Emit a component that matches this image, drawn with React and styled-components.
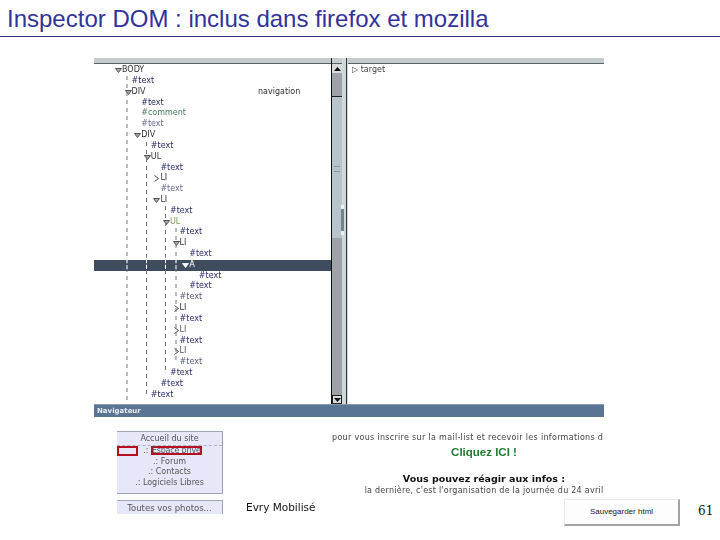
import React from "react";
import styled, { createGlobalStyle } from "styled-components";

const Global = createGlobalStyle`
  html, body { margin: 0; padding: 0; background: #fff; }
  #root { width: 720px; height: 540px; overflow: hidden; }
`;

const Slide = styled.div`
  position: relative;
  width: 720px;
  height: 540px;
  background: #fff;
  overflow: hidden;
`;
const Title = styled.h1`
  margin: 0;
  height: 36px;
  padding-left: 7px;
  border-bottom: 1px solid #333388;
  font: 400 24px/37px "Liberation Sans", Arial, sans-serif;
  color: #333399;
  white-space: nowrap;
`;
const Shot = styled.div`
  width: 510px;
  height: 456px;
  margin: 21px 0 0 94px;
  display: flex;
  flex-direction: column;
  overflow: hidden;
  filter: blur(0.35px);
`;
const Inspector = styled.div`
  display: flex;
  height: 346px;
`;
const TreePane = styled.div`
  position: relative;
  width: 237px;
  flex: none;
  display: flex;
  flex-direction: column;
  overflow: hidden;
`;
const HeaderBar = styled.div`
  flex: none;
  height: 5px;
  background: #c6cbd0;
  border-bottom: 1px solid #5a6068;
`;
const TreeBody = styled.div`
  padding-top: 1.2px;
`;
const Row = styled.div`
  position: relative;
  display: flex;
  align-items: center;
  height: 10.82px;
  padding-left: ${p => 28 + p.$level * 9.6}px;
  background: ${p => (p.$selected ? "#3f4c5e" : "transparent")};
  color: ${p => (p.$selected ? "#fff" : p.$color || "#2a2a6a")};
  font: 400 8px/10.82px "DejaVu Sans", sans-serif;
  white-space: nowrap;
`;
const Twisty = styled.svg`
  position: absolute;
  left: ${p => 28 + p.$level * 9.6 - 7}px;
  top: 2px;
  width: 7px;
  height: 7px;
`;
const ValueCell = styled.span`
  position: absolute;
  left: 164px;
  color: #333;
`;
const Guides = styled.svg`
  position: absolute;
  left: 0;
  top: 0;
  width: 237px;
  height: 346px;
  pointer-events: none;
`;
const Scroll = styled.div`
  width: 11px;
  flex: none;
  display: flex;
  flex-direction: column;
  background: #9ea3a8;
  border-left: 1px solid #111;
  box-sizing: border-box;
`;
const ScrollCap = styled.div`
  flex: none;
  height: 5px;
  background: #c6cbd0;
  border-bottom: 1px solid #5a6068;
`;
const ScrollButton = styled.div`
  flex: none;
  height: 9px;
  background: #d8dcdf;
  border: ${p => (p.$outlined ? "1px solid #222" : "0")};
  box-sizing: border-box;
  display: flex;
  align-items: center;
  justify-content: center;
`;
const ScrollGutter = styled.div`
  flex: ${p => (p.$grow ? 1 : "none")};
  height: ${p => (p.$grow ? "auto" : "23px")};
  background: #9ea3a8;
`;
const ScrollThumb = styled.div`
  flex: none;
  height: 142px;
  box-sizing: border-box;
  background: #b8c4cc;
  border-top: 1px solid #222;
  display: flex;
  justify-content: center;
  padding-top: 69px;
`;
const ScrollGrip = styled.div`
  width: 6px;
  height: 4px;
  border-top: 1px solid #8c959c;
  border-bottom: 1px solid #8c959c;
`;
const Splitter = styled.div`
  position: relative;
  width: 4px;
  flex: none;
  background: #d0d8dc;
  border-right: 1px solid #2c3238;
`;
const SplitGrip = styled.div`
  position: absolute;
  left: -1px;
  top: 147px;
  width: 3px;
  height: 30px;
  box-sizing: border-box;
  background: #76828c;
  border-top: 4px solid #eef2f4;
  border-bottom: 4px solid #eef2f4;
`;
const PropsPane = styled.div`
  flex: 1;
  display: flex;
  flex-direction: column;
  border-left: 1px solid #d0d8dc;
`;
const PropRow = styled.div`
  padding: 0 0 0 4px;
  font: 400 8px/11px "DejaVu Sans", sans-serif;
  color: #444;
`;
const NavBar = styled.div`
  flex: none;
  height: 13px;
  background: #5a7593;
  border-top: 1px solid #8a9cb0;
  box-sizing: border-box;
  padding-left: 3px;
  font: 700 7px/12px "DejaVu Sans", sans-serif;
  color: #e8eef4;
`;
const Page = styled.div`
  flex: 1;
  display: flex;
  padding-top: 14px;
  min-height: 0;
  overflow: hidden;
`;
const LeftColumn = styled.div`
  width: 106px;
  margin-left: 23px;
  flex: none;
  display: flex;
  flex-direction: column;
  gap: 6px;
`;
const MenuBox = styled.div`
  height: 63px;
  box-sizing: border-box;
  background: #e6e8fa;
  border-top: 1px solid #a0a6b4;
  border-right: 1px solid #9aa0ae;
  border-bottom: 1px solid #9aa0ae;
  color: #555;
  font: 400 8px/10.7px "DejaVu Sans", sans-serif;
  text-align: center;
  padding-top: 2px;
`;
const MenuHead = styled.div`
  height: 11px;
  border-bottom: 1px dashed #b0b4c0;
`;
const MenuRow = styled.div`
  position: relative;
  padding-left: ${p => p.$shift || 0}px;
`;
const Marked = styled.span`
  box-shadow: inset 0 0 0 2px #b80f20;
  padding: 0 1px;
  letter-spacing: -0.2px;
`;
const RedBox = styled.span`
  position: absolute;
  left: 0;
  top: 0;
  width: 21px;
  height: 10px;
  border: 2px solid #b80f20;
  box-sizing: border-box;
`;
const PhotosBox = styled.div`
  height: 14px;
  background: #e6e8fa;
  border-top: 1px solid #a0a6b4;
  border-right: 1px solid #9aa0ae;
  box-sizing: border-box;
  color: #555;
  font: 400 8.5px/15px "DejaVu Sans", sans-serif;
  text-align: center;
`;
const Brand = styled.div`
  align-self: flex-end;
  margin: 0 0 0 23px;
  font: 400 10.5px/13px "DejaVu Sans", sans-serif;
  color: #111;
  white-space: nowrap;
`;
const Info = styled.div`
  width: 272px;
  margin-left: auto;
  flex: none;
  overflow: hidden;
  padding-top: 1px;
`;
const InfoInner = styled.div`
  width: 304px;
  text-align: center;
`;
const InfoLine = styled.div`
  font: 400 8px/11px "DejaVu Sans", sans-serif;
  color: #444;
  white-space: nowrap;
  letter-spacing: ${p => p.$spacing || 0}px;
  text-align: ${p => p.$align || "center"};
`;
const Cta = styled.div`
  margin-top: 2px;
  font: 700 11.5px/14px "Liberation Sans", sans-serif;
  color: #1f7a32;
`;
const Heading = styled.div`
  margin-top: 13px;
  font: 700 9.5px/13px "DejaVu Sans", sans-serif;
  color: #111;
  white-space: nowrap;
`;
const SaveButton = styled.div`
  position: absolute;
  left: 564px;
  top: 499px;
  width: 116px;
  height: 27px;
  box-sizing: border-box;
  background: #fdfdfd;
  border-top: 1px solid #e8e8e8;
  border-left: 1px solid #e8e8e8;
  border-right: 2px solid #a4a4a4;
  border-bottom: 2px solid #a4a4a4;
  display: flex;
  align-items: center;
  justify-content: center;
  font: 400 8px/10px "Liberation Sans", sans-serif;
  color: #222;
`;
const PageNumber = styled.div`
  position: absolute;
  left: 698px;
  top: 503px;
  font: 400 12px/16px "DejaVu Serif", serif;
  color: #111;
`;

const rows = [
  ["BODY", 0, "open", "#333"],
  ["#text", 1],
  ["DIV", 1, "open", "#333"],
  ["#text", 2],
  ["#comment", 2, null, "#4a7a5a"],
  ["#text", 2, null, "#666a8a"],
  ["DIV", 2, "open", "#333"],
  ["#text", 3],
  ["UL", 3, "open", "#333"],
  ["#text", 4],
  ["LI", 4, "closed", "#333"],
  ["#text", 4, null, "#666a8a"],
  ["LI", 4, "open", "#333"],
  ["#text", 5],
  ["UL", 5, "open", "#7a9a5a"],
  ["#text", 6],
  ["LI", 6, "open", "#333"],
  ["#text", 7],
  ["A", 7, "open", "#fff", true],
  ["#text", 8],
  ["#text", 7],
  ["#text", 6, null, "#555a7a"],
  ["LI", 6, "closed", "#333"],
  ["#text", 6],
  ["LI", 6, "closed", "#555"],
  ["#text", 6],
  ["LI", 6, "closed", "#555"],
  ["#text", 6, null, "#555a7a"],
  ["#text", 5],
  ["#text", 4],
  ["#text", 3],
];

const guides = [
  { x: 33, y1: 18, y2: 346 },
  { x: 52.5, y1: 84, y2: 338 },
  { x: 71.5, y1: 148, y2: 312 },
  { x: 82, y1: 170, y2: 306 },
];

function Arrow({ state, level, selected }) {
  const stroke = selected ? "#fff" : "#333";
  return (
    <Twisty $level={level} viewBox="0 0 7 7">
      {state === "open" ? (
        <path d="M0.5 1.5H6.5L3.5 5.5Z" fill={selected ? "#fff" : "#aaa"} stroke={stroke} strokeWidth="0.8" />
      ) : (
        <path d="M1.5 0.5L5.5 3.5L1.5 6.5" fill="none" stroke={stroke} strokeWidth="0.9" />
      )}
    </Twisty>
  );
}

export default function App() {
  return (
    <Slide>
      <Global />
      <Title>Inspector DOM : inclus dans firefox et mozilla</Title>
      <Shot>
        <Inspector>
          <TreePane>
            <HeaderBar />
            <TreeBody>
              {rows.map(([label, level, state, color, selected], i) => (
                <Row key={i} $level={level} $color={color} $selected={selected}>
                  {state && <Arrow state={state} level={level} selected={selected} />}
                  {label}
                  {label === "DIV" && level === 1 && <ValueCell>navigation</ValueCell>}
                </Row>
              ))}
            </TreeBody>
            <Guides viewBox="0 0 237 346">
              {guides.map(g => (
                <g key={g.x}>
                  <line x1={g.x} x2={g.x} y1={g.y1} y2={g.y2} stroke="#777" strokeDasharray="4 4" />
                  <line x1={g.x} x2={g.x} y1={201} y2={211} stroke="#fff" strokeDasharray="4 2" />
                </g>
              ))}
            </Guides>
          </TreePane>
          <Scroll>
            <ScrollCap />
            <ScrollButton>
              <svg width="7" height="4" viewBox="0 0 7 4"><path d="M3.5 0L7 4H0Z" fill="#111" /></svg>
            </ScrollButton>
            <ScrollGutter />
            <ScrollThumb><ScrollGrip /></ScrollThumb>
            <ScrollGutter $grow />
            <ScrollButton $outlined>
              <svg width="7" height="4" viewBox="0 0 7 4"><path d="M0 0H7L3.5 4Z" fill="#111" /></svg>
            </ScrollButton>
          </Scroll>
          <Splitter><SplitGrip /></Splitter>
          <PropsPane>
            <HeaderBar />
            <PropRow>▷ target</PropRow>
          </PropsPane>
        </Inspector>
        <NavBar>Navigateur</NavBar>
        <Page>
          <LeftColumn>
            <MenuBox>
              <MenuHead>Accueil du site</MenuHead>
              <MenuRow $shift={6}><RedBox />.: <Marked>Espace privé</Marked></MenuRow>
              <MenuRow>.: Forum</MenuRow>
              <MenuRow>.: Contacts</MenuRow>
              <MenuRow>.: Logiciels Libres</MenuRow>
            </MenuBox>
            <PhotosBox>Toutes vos photos...</PhotosBox>
          </LeftColumn>
          <Brand>Evry Mobilisé</Brand>
          <Info>
            <InfoInner>
              <InfoLine $align="left" $spacing={0.31}>pour vous inscrire sur la mail-list et recevoir les informations d</InfoLine>
              <Cta>Cliquez ICI !</Cta>
              <Heading>Vous pouvez réagir aux infos :</Heading>
              <InfoLine $spacing={0.25}>la dernière, c'est l'organisation de la journée du 24 avril</InfoLine>
            </InfoInner>
          </Info>
        </Page>
      </Shot>
      <SaveButton>Sauvegarder html</SaveButton>
      <PageNumber>61</PageNumber>
    </Slide>
  );
}
